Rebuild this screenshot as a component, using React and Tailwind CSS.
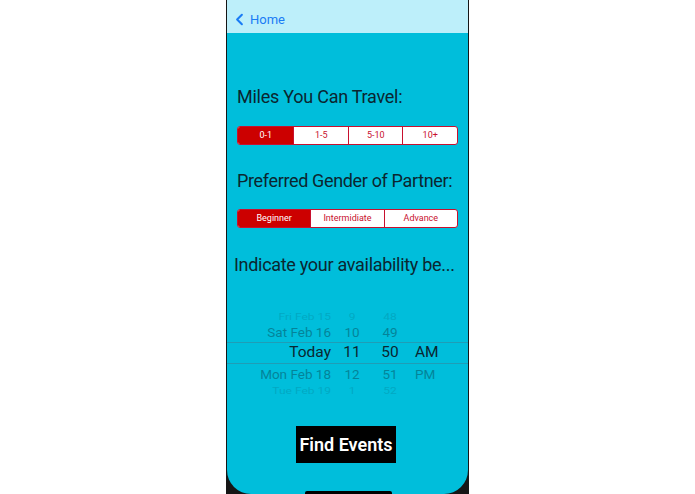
import { ChevronLeft } from 'lucide-react'

const font = { fontFamily: 'Roboto, "Noto Sans", sans-serif' }

const Segmented = ({ options, selected, widths }) => (
    <div className="flex h-[19px] rounded-[3px] border border-[#c8102e] bg-white overflow-hidden">
        {options.map((opt, i) => (
            <div
                key={opt}
                className={`flex items-center justify-center text-[9px] ${i > 0 ? 'border-l border-[#c8102e]' : ''} ${
                    i === selected ? 'bg-[#cc0000] text-white' : 'text-[#c8102e]'
                }`}
                style={{ width: widths[i] }}
            >
                {opt}
            </div>
        ))}
    </div>
)

const pickerRows = [
    { date: 'Fri Feb 15', h: '9', m: '48', ap: '', cls: 'text-[12px] opacity-[0.14] h-[11px] scale-y-75' },
    { date: 'Sat Feb 16', h: '10', m: '49', ap: '', cls: 'text-[13.5px] opacity-[0.38] h-[20px]' },
    { date: 'Today', h: '11', m: '50', ap: 'AM', cls: 'text-[15.5px] h-[20px]' },
    { date: 'Mon Feb 18', h: '12', m: '51', ap: 'PM', cls: 'text-[13.5px] opacity-[0.38] h-[21px]' },
    { date: 'Tue Feb 19', h: '1', m: '52', ap: '', cls: 'text-[12px] opacity-[0.14] h-[11px] scale-y-75' },
]

export default function App() {
    return (
        <div className="w-[695px] h-[494px] bg-white flex justify-center overflow-hidden" style={font}>
            <div className="w-[243px] h-[494px] bg-[#161616] px-px">
                <div className="relative h-full bg-[#00bedb] rounded-b-[24px] flex flex-col">
                    <div className="h-[33px] bg-[#bdeffa] flex items-center pt-[6px] pl-[3px] text-[#1a7cf5]">
                        <ChevronLeft className="w-[19px] h-[19px]" strokeWidth={2.6} />
                        <span className="text-[13px] ml-px">Home</span>
                    </div>

                    <div className="px-[10px] text-[#0b2630]">
                        <h2 className="mt-[53px] text-[18px] leading-[22px] tracking-[-0.25px] whitespace-nowrap">
                            Miles You Can Travel:
                        </h2>
                        <div className="mt-[18px]">
                            <Segmented options={['0-1', '1-5', '5-10', '10+']} selected={0} widths={[56, 55, 55, 55]} />
                        </div>
                        <h2 className="mt-[25px] text-[18px] leading-[22px] tracking-[-0.35px] whitespace-nowrap">
                            Preferred Gender of Partner:
                        </h2>
                        <div className="mt-[17px]">
                            <Segmented options={['Beginner', 'Intermidiate', 'Advance']} selected={0} widths={[73, 74, 74]} />
                        </div>
                    </div>

                    <h2 className="mt-[26px] ml-[7px] text-[18px] leading-[22px] tracking-[-0.3px] text-[#0b2630] whitespace-nowrap">
                        Indicate your availability be...
                    </h2>

                    <div className="mt-[35px] flex flex-col text-[#0b2630]">
                        {pickerRows.map((r, i) => (
                            <div key={r.date} className={i === 2 ? 'border-y border-[#1f9db6]' : ''}>
                                <div className={`flex items-center ${r.cls}`}>
                                    <span className="w-[104px] text-right">{r.date}</span>
                                    <span className="w-[42px] text-center">{r.h}</span>
                                    <span className="w-[34px] text-center">{r.m}</span>
                                    <span className="ml-[8px]">{r.ap}</span>
                                </div>
                            </div>
                        ))}
                    </div>

                    <div className="mt-[30px] flex justify-center">
                        <button className="w-[100px] h-[37px] bg-black text-white text-[18px] font-semibold whitespace-nowrap mr-[3px]">
                            Find Events
                        </button>
                    </div>

                    <div className="absolute bottom-0 left-[78px] w-[87px] h-[3px] bg-black rounded-t-[2px]" />
                </div>
            </div>
        </div>
    )
}
